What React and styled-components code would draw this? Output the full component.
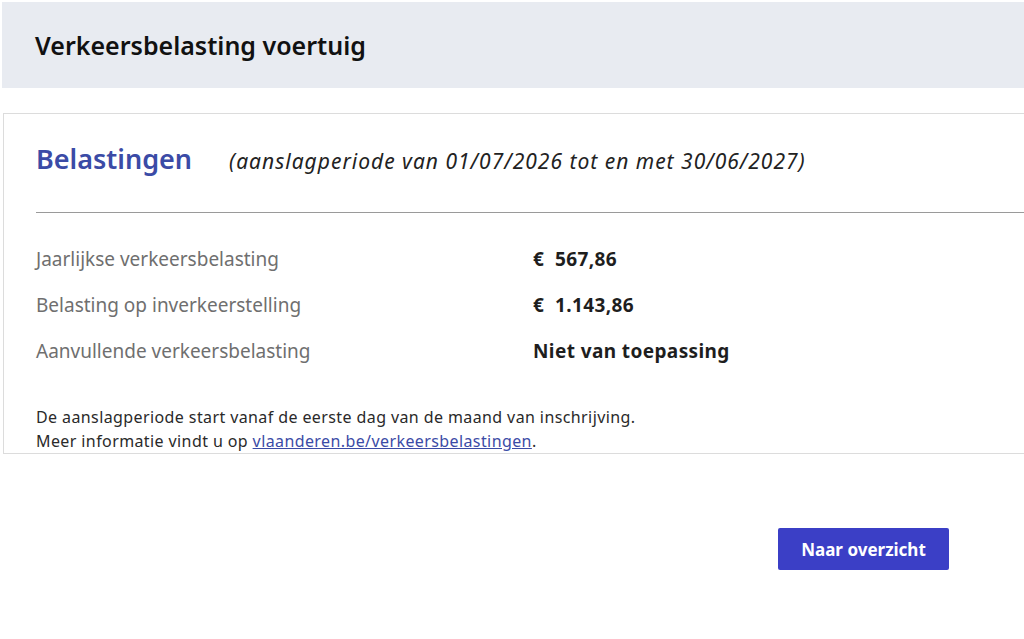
import React from "react";
import styled, { createGlobalStyle } from "styled-components";

const Global = createGlobalStyle`
  html, body { margin: 0; padding: 0; background: #fff; }
  body { font-family: "Noto Sans", "Open Sans", sans-serif; color: #222; }
`;

const Page = styled.div`
  padding: 2px 0 0 2px;
  width: 1022px;
`;

const Header = styled.header`
  background: #e8ebf1;
  height: 86px;
  display: flex;
  align-items: center;
  padding-left: 33px;
`;

const Title = styled.h1`
  margin: 0;
  font-size: 25px;
  font-weight: 600;
  color: #111;
`;

const Card = styled.section`
  margin: 25px 0 0 1px;
  border: 1px solid #dcdcdc;
  border-right: none;
  padding: 0 0 0 32px;
  height: 341px;
  box-sizing: border-box;
`;

const CardHead = styled.div`
  display: flex;
  align-items: baseline;
  gap: 37px;
  padding-top: 26px;
  height: 72px;
  border-bottom: 1px solid #9a9a9a;
`;

const CardTitle = styled.h2`
  margin: 0;
  font-size: 27px;
  font-weight: 600;
  color: #3b4ba6;
`;

const Period = styled.span`
  font-size: 21px;
  font-style: italic;
  letter-spacing: 1px;
  color: #222;
`;

const Rows = styled.div`
  padding-top: 23px;
  display: flex;
  flex-direction: column;
`;

const Row = styled.div`
  display: grid;
  grid-template-columns: 497px 1fr;
  height: 46px;
  align-items: center;
  font-size: 19px;
`;

const Label = styled.span`
  color: #6f6f6f;
`;

const Value = styled.span`
  font-weight: 700;
  letter-spacing: 0.4px;
  color: #1e1e1e;
  white-space: pre;
`;

const Note = styled.p`
  margin: 31px 0 0;
  font-size: 16px;
  letter-spacing: 0.4px;
  line-height: 24px;
  color: #2a2a2a;
`;

const Link = styled.a`
  color: #3b4ba6;
  text-decoration: underline;
`;

const Actions = styled.div`
  display: flex;
  justify-content: flex-end;
  padding: 74px 75px 0 0;
`;

const Button = styled.button`
  background: #3b3fc6;
  color: #fff;
  border: none;
  border-radius: 2px;
  width: 171px;
  height: 42px;
  font-family: inherit;
  font-size: 17px;
  font-weight: 700;
`;

const rows = [
  ["Jaarlijkse verkeersbelasting", "€  567,86"],
  ["Belasting op inverkeerstelling", "€  1.143,86"],
  ["Aanvullende verkeersbelasting", "Niet van toepassing"],
];

export default function App() {
  return (
    <Page>
      <Global />
      <Header>
        <Title>Verkeersbelasting voertuig</Title>
      </Header>
      <Card>
        <CardHead>
          <CardTitle>Belastingen</CardTitle>
          <Period>(aanslagperiode van 01/07/2026 tot en met 30/06/2027)</Period>
        </CardHead>
        <Rows>
          {rows.map(([l, v]) => (
            <Row key={l}>
              <Label>{l}</Label>
              <Value>{v}</Value>
            </Row>
          ))}
        </Rows>
        <Note>
          De aanslagperiode start vanaf de eerste dag van de maand van inschrijving.
          <br />
          Meer informatie vindt u op <Link href="#">vlaanderen.be/verkeersbelastingen</Link>.
        </Note>
      </Card>
      <Actions>
        <Button>Naar overzicht</Button>
      </Actions>
    </Page>
  );
}
